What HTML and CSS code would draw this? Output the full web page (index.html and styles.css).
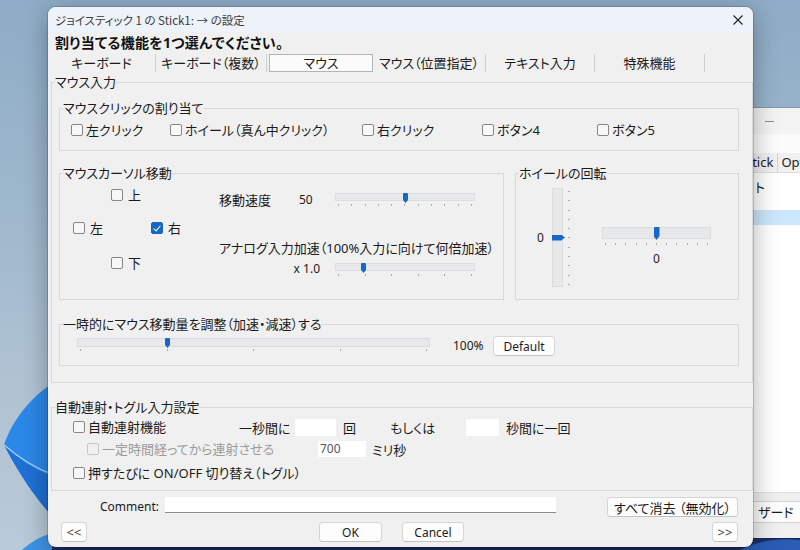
FILE: index.html
```html
<!DOCTYPE html>
<html lang="ja">
<head>
<meta charset="utf-8">
<title>Stick1 設定</title>
<link rel="stylesheet" href="styles.css">
</head>
<body>
<div class="desktop">
  <svg class="wallpaper" width="800" height="550" viewBox="0 0 800 550">
    <path d="M52 384 C32 396 12 420 4 445 C16 468 32 494 52 516 Z" fill="#2b88e8"/>
    <path d="M4 445 C18 458 34 470 52 476 L52 516 C32 494 16 468 4 445 Z" fill="#1f70d6"/>
    <path d="M4 445 C18 457 34 468 52 474" stroke="#a6d5fb" stroke-width="1.2" fill="none"/>
    <path d="M22 550 C32 541 42 536 52 533 L52 550 Z" fill="#3d93e6"/>
    <rect x="52" y="536" width="748" height="14" fill="#1b2d62"/>
    <path d="M740 550 C760 540 780 538 800 540 L800 550 Z" fill="#2a5bb5"/>
  </svg>

  <div class="bgwin">
    <div class="bgwin-title"><span class="bgwin-min"></span></div>
    <div class="bgwin-blank"></div>
    <div class="bgwin-menu"><span class="bgwin-menu-item">Stick</span><span class="bgwin-menu-item last">Opt</span></div>
    <div class="bgwin-list">
      <div class="bgwin-row">ト</div>
      <div class="bgwin-sel"></div>
    </div>
    <div class="bgwin-foot"><span class="bgwin-btn">ザード</span></div>
  </div>

  <div class="dialog">
    <div class="titlebar">
      <span class="title">ジョイスティック 1 の Stick1: → の設定</span>
      <svg class="close" width="10" height="10" viewBox="0 0 10 10"><path d="M0.5 0.5 L9.5 9.5 M9.5 0.5 L0.5 9.5" stroke="#1f1f1f" stroke-width="1.1"/></svg>
    </div>

    <h1 class="heading">割り当てる機能を1つ選んでください。</h1>

    <div class="tabs">
      <span class="tab t1">キーボード</span>
      <span class="tab t2">キーボード（複数）</span>
      <span class="tab t3 active">マウス</span>
      <span class="tab t4">マウス（位置指定）</span>
      <span class="tab t5">テキスト入力</span>
      <span class="tab t6">特殊機能</span>
    </div>

    <fieldset class="group outer">
      <legend>マウス入力</legend>

      <fieldset class="group click">
        <legend>マウスクリックの割り当て</legend>
        <div class="click-row">
          <label class="cb w99"><span class="box"></span>左クリック</label>
          <label class="cb w192"><span class="box"></span>ホイール（真ん中クリック）</label>
          <label class="cb w120"><span class="box"></span>右クリック</label>
          <label class="cb w115"><span class="box"></span>ボタン4</label>
          <label class="cb"><span class="box"></span>ボタン5</label>
        </div>
      </fieldset>

      <div class="move-row">
        <fieldset class="group cursor">
          <legend>マウスカーソル移動</legend>
          <div class="cursor-body">
            <div class="dpad">
              <label class="cb up"><span class="box"></span>上</label>
              <label class="cb left"><span class="box"></span>左</label>
              <label class="cb right"><span class="box checked"></span>右</label>
              <label class="cb down"><span class="box"></span>下</label>
            </div>
            <div class="move-col">
              <div class="mrow r1">
                <span class="mlabel">移動速度</span>
                <span class="mvalue">50</span>
                <div class="slider s140">
                  <div class="track"></div>
                  <span class="thumb" style="left:50%"></span>
                  <div class="ticks"><i></i><i></i><i></i><i></i><i></i><i></i><i></i><i></i><i></i><i></i><i></i></div>
                </div>
              </div>
              <div class="mrow r2">アナログ入力加速（100%入力に向けて何倍加速）</div>
              <div class="mrow r3">
                <span class="mvalue-right">x 1.0</span>
                <div class="slider s140 low">
                  <div class="track"></div>
                  <span class="thumb" style="left:20%"></span>
                  <div class="ticks"><i></i><i></i><i></i><i></i><i></i><i></i></div>
                </div>
              </div>
            </div>
          </div>
        </fieldset>

        <fieldset class="group wheel">
          <legend>ホイールの回転</legend>
          <div class="wheel-body">
            <span class="vlabel">0</span>
            <div class="vslider">
              <div class="vtrack"><span class="vthumb" style="top:50%"></span></div>
              <div class="vticks"><i></i><i></i><i></i><i></i><i></i><i></i><i></i><i></i><i></i><i></i><i></i></div>
            </div>
            <div class="hwrap">
              <div class="slider s109 tall">
                <div class="track"></div>
                <span class="thumb" style="left:50%"></span>
                <div class="ticks"><i></i><i></i><i></i><i></i><i></i><i></i><i></i><i></i><i></i><i></i><i></i></div>
              </div>
              <div class="hvalue">0</div>
            </div>
          </div>
        </fieldset>
      </div>

      <fieldset class="group temp">
        <legend>一時的にマウス移動量を調整（加速・減速）する</legend>
        <div class="temp-body">
          <div class="slider s353 mid">
            <div class="track"></div>
            <span class="thumb" style="left:25.5%"></span>
            <div class="ticks"><i></i><i></i><i></i><i></i><i></i></div>
          </div>
          <span class="percent">100%</span>
          <span class="btn btn-default">Default</span>
        </div>
      </fieldset>
    </fieldset>

    <fieldset class="group auto">
      <legend>自動連射・トグル入力設定</legend>
      <div class="auto-body">
        <div class="arow a1">
          <label class="cb w166"><span class="box"></span>自動連射機能</label>
          <span class="w56">一秒間に</span>
          <span class="field f41"></span>
          <span class="unit1">回</span>
          <span class="w76">もしくは</span>
          <span class="field f33"></span>
          <span class="unit2">秒間に一回</span>
        </div>
        <div class="arow a2">
          <label class="cb disabled w231"><span class="box"></span>一定時間経ってから連射させる</label>
          <span class="field f48">700</span>
          <span class="unit3">ミリ秒</span>
        </div>
        <div class="arow a3">
          <label class="cb"><span class="box"></span>押すたびに ON/OFF 切り替え（トグル）</label>
        </div>
      </div>
    </fieldset>

    <div class="comment-row">
      <span class="comment-label">Comment:</span>
      <span class="comment-input"></span>
      <span class="btn btn-clear">すべて消去 （無効化）</span>
    </div>

    <div class="button-row">
      <span class="btn btn-nav">&lt;&lt;</span>
      <span class="btn btn-ok">OK</span>
      <span class="btn btn-cancel">Cancel</span>
      <span class="btn btn-nav btn-next">&gt;&gt;</span>
    </div>
  </div>
</div>
</body>
</html>
```

FILE: styles.css
```css
* { box-sizing: border-box; }

html, body {
  margin: 0;
  padding: 0;
}

body {
  width: 800px;
  height: 550px;
  overflow: hidden;
  font-family: "Noto Sans", "Noto Sans CJK JP", sans-serif;
  font-size: 13px;
  color: #1b1b1b;
  font-feature-settings: "palt";
}

.desktop {
  position: relative;
  width: 800px;
  height: 550px;
  overflow: hidden;
  background: linear-gradient(180deg, #8eacc7 0%, #9db7cc 35%, #b0c3d3 70%, #b9cad8 100%);
}

.wallpaper {
  position: absolute;
  left: 0;
  top: 0;
}

/* background window on the right */
.bgwin {
  position: absolute;
  left: 740px;
  top: 108px;
  width: 60px;
  height: 430px;
  overflow: hidden;
  background: #ffffff;
  display: flex;
  flex-direction: column;
  box-shadow: 0 0 0 1px rgba(0,0,0,0.15);
}

.bgwin-title {
  height: 26px;
  background: #f3f3f3;
  position: relative;
}

.bgwin-min {
  position: absolute;
  left: 25px;
  top: 13px;
  width: 9px;
  height: 1px;
  background: #8a8a8a;
}

.bgwin-blank {
  height: 19px;
  background: #fbfbfb;
}

.bgwin-menu {
  height: 20px;
  background: #f0f0f0;
  border-bottom: 1px solid #dedede;
  display: flex;
  align-items: center;
  padding-left: 5px;
  font-size: 13px;
  white-space: nowrap;
}

.bgwin-menu-item {
  padding-right: 4px;
  border-right: 1px solid #d5d5d5;
  line-height: 19px;
}

.bgwin-menu-item.last {
  padding-left: 3px;
  padding-right: 0;
  border-right: none;
}

.bgwin-list {
  flex: 1;
  padding-top: 6px;
  border-bottom: 1px solid #dedede;
}

.bgwin-row {
  height: 16px;
  line-height: 16px;
  padding-left: 15px;
  font-size: 13px;
}

.bgwin-sel {
  margin-top: 15px;
  height: 15px;
  background: #cce6fb;
}

.bgwin-foot {
  height: 45px;
  background: #f0f0f0;
  padding-top: 8px;
  padding-left: 8px;
}

.bgwin-btn {
  display: block;
  height: 22px;
  line-height: 20px;
  padding-left: 9px;
  background: #fdfdfd;
  border: 1px solid #d3d3d3;
  border-right: none;
  border-radius: 4px 0 0 4px;
  font-size: 13px;
  white-space: nowrap;
}

/* dialog */
.dialog {
  position: absolute;
  left: 48px;
  top: 7px;
  width: 705px;
  height: 540px;
  background: #f0f0f0;
  border-radius: 8px;
  overflow: hidden;
  box-shadow: 0 0 0 1px rgba(0,0,0,0.16), 0 6px 26px rgba(0,0,0,0.33);
  display: flex;
  flex-direction: column;
}

.titlebar {
  height: 25px;
  flex: none;
  background: #eef3f9;
  display: flex;
  align-items: center;
  padding-left: 7px;
}

.title {
  font-family: "Noto Sans CJK JP", sans-serif;
  font-size: 11.5px;
  color: #3b3b3b;
  line-height: 16px;
}

.close {
  margin-left: auto;
  margin-right: 10px;
}

.heading {
  margin: 3px 0 0 7px;
  font-size: 14px;
  font-weight: bold;
  line-height: 16px;
  letter-spacing: 0.3px;
  color: #111;
}

.tabs {
  display: flex;
  margin-top: 3px;
  height: 18px;
  flex: none;
}

.tab {
  height: 18px;
  line-height: 18px;
  text-align: center;
  border-right: 1px solid #cfcfcf;
  white-space: nowrap;
}

.t1 { width: 108px; }
.t2 { width: 111px; }
.t3 { width: 104px; margin-left: 2px; }
.t4 { width: 113px; }
.t5 { width: 109px; }
.t6 { width: 110px; }

.tab.active {
  background: #fbfbfb;
  border: 1px solid #b4b4b4;
  line-height: 16px;
}

/* group boxes */
.group {
  margin: 0;
  padding: 0;
  min-width: 0;
  border: 1px solid #d9d9d9;
}

.group > legend {
  padding: 0;
  margin-left: 3px;
  line-height: 15px;
  height: 15px;
  font-size: 13px;
  white-space: nowrap;
}

.outer {
  margin: 3px 0 0 3px;
  width: 702px;
  padding-bottom: 16px;
}

.click {
  margin: 11px 0 0 7px;
  width: 680px;
}

.click-row {
  display: flex;
  padding: 6px 0 12px 11px;
}

/* checkboxes */
.cb {
  display: inline-flex;
  align-items: center;
  height: 16px;
  line-height: 16px;
  white-space: nowrap;
}

.box {
  width: 12px;
  height: 12px;
  flex: none;
  border: 1px solid #878787;
  border-radius: 2px;
  background: #f7f7f7;
  margin-right: 3px;
  position: relative;
}

.box.checked {
  background: #1767c6;
  border-color: #1767c6;
}

.box.checked::after {
  content: "";
  position: absolute;
  left: 3px;
  top: 1px;
  width: 3px;
  height: 6px;
  border-right: 1.5px solid #fff;
  border-bottom: 1.5px solid #fff;
  transform: rotate(40deg);
}

.cb.disabled {
  color: #9c9c9c;
}

.cb.disabled .box {
  border-color: #c6c6c6;
  background: #f0f0f0;
}

.w99 { width: 99px; }
.w192 { width: 192px; }
.w120 { width: 120px; }
.w115 { width: 115px; }
.w166 { width: 166px; }
.w231 { width: 231px; }
.w56 { width: 56px; white-space: nowrap; }
.w76 { width: 76px; white-space: nowrap; }

/* cursor + wheel */
.move-row {
  display: flex;
  margin: 15px 0 0 7px;
}

.cursor {
  width: 445px;
}

.wheel {
  width: 224px;
  margin-left: 11px;
}

.cursor-body {
  display: flex;
  height: 118px;
}

.dpad {
  display: grid;
  grid-template-columns: 38px 40px 68px;
  grid-template-rows: 33px 35px 16px;
  align-items: start;
  margin: 6px 0 0 13px;
  height: 84px;
}

.dpad .up { grid-column: 2; grid-row: 1; }
.dpad .left { grid-column: 1; grid-row: 2; }
.dpad .right { grid-column: 3; grid-row: 2; }
.dpad .down { grid-column: 2; grid-row: 3; }
.dpad .box { margin-right: 5px; }

.move-col {
  display: flex;
  flex-direction: column;
}

.mrow {
  height: 16px;
  line-height: 16px;
  display: flex;
  white-space: nowrap;
}

.r1 { margin-top: 11px; }
.r2 { margin-top: 32px; }
.r3 { margin-top: 5px; }

.mlabel { width: 80px; }

.mvalue {
  width: 36px;
  font-size: 12px;
}

.mvalue-right {
  width: 116px;
  padding-right: 15px;
  text-align: right;
  font-size: 12px;
}

/* sliders */
.slider {
  position: relative;
  flex: none;
}

.slider .track {
  height: 8px;
  background: #e6e8e9;
  border: 1px solid #dadddf;
}

.slider .thumb {
  position: absolute;
  top: 0;
  width: 5px;
  height: 10px;
  margin-left: -2px;
  background: #1767c6;
  border-radius: 1px 1px 0 0;
  clip-path: polygon(0 0, 100% 0, 100% 70%, 50% 100%, 0 70%);
}

.slider .ticks {
  display: flex;
  justify-content: space-between;
  padding: 0 3px;
  margin-top: 3px;
  height: 2px;
}

.ticks i {
  display: block;
  width: 1px;
  height: 2px;
  background: #ababab;
}

.s140 { width: 140px; margin-top: 1px; }
.s140.low { margin-top: 2px; }

.s109 { width: 109px; }

.slider.tall .track { height: 12px; }
.slider.tall .thumb { width: 6px; height: 13px; margin-left: -3px; }
.slider.tall .ticks { margin-top: 4px; }

.s353 { width: 353px; margin-top: 6px; }
.slider.mid .track { height: 9px; }
.slider.mid .ticks { margin-top: 2px; }

/* wheel */
.wheel-body {
  display: flex;
  height: 118px;
  padding-left: 21px;
}

.vlabel {
  width: 15px;
  height: 16px;
  line-height: 16px;
  margin-top: 49px;
  font-size: 12px;
}

.vslider {
  display: flex;
  margin-top: 7px;
  height: 99px;
}

.vtrack {
  position: relative;
  width: 11px;
  height: 99px;
  background: #e6e8e9;
  border: 1px solid #dadddf;
}

.vthumb {
  position: absolute;
  left: -1px;
  width: 13px;
  height: 6px;
  margin-top: -3px;
  background: #1767c6;
  clip-path: polygon(0 0, 70% 0, 100% 50%, 70% 100%, 0 100%);
}

.vticks {
  display: flex;
  flex-direction: column;
  justify-content: space-between;
  margin-left: 5px;
  padding: 3px 0 2px;
  height: 99px;
}

.vticks i {
  display: block;
  width: 2px;
  height: 1px;
  background: #ababab;
}

.hwrap {
  width: 109px;
  margin: 46px 0 0 32px;
}

.hvalue {
  margin-top: 6px;
  text-align: center;
  line-height: 16px;
  font-size: 12px;
}

/* temporary adjust */
.temp {
  margin: 17px 0 0 7px;
  width: 680px;
}

.temp-body {
  display: flex;
  align-items: flex-start;
  height: 33px;
  padding-left: 17px;
}

.percent {
  margin: 6px 0 0 23px;
  width: 40px;
  line-height: 16px;
  font-size: 12px;
}

/* buttons */
.btn {
  display: inline-flex;
  align-items: center;
  justify-content: center;
  height: 20px;
  background: #fdfdfd;
  border: 1px solid #d5d5d5;
  border-bottom-color: #c3c3c3;
  border-radius: 4px;
  font-size: 12px;
  white-space: nowrap;
  flex: none;
}

.btn-default {
  width: 62px;
  margin-top: 4px;
}

/* auto fire */
.auto {
  margin: 17px 0 0 3px;
  width: 702px;
}

.auto-body {
  padding: 3px 0 8px 21px;
}

.arow {
  display: flex;
  align-items: center;
  height: 18px;
  white-space: nowrap;
}

.a2 { margin-top: 4px; padding-left: 14px; }
.a3 { margin-top: 6px; }

.field {
  display: block;
  height: 17px;
  background: #ffffff;
  flex: none;
}

.f41 { width: 41px; }
.f33 { width: 33px; }
.f48 {
  width: 48px;
  height: 16px;
  line-height: 16px;
  padding-left: 2px;
  font-size: 12px;
  color: #555;
}

.unit1 { width: 47px; margin-left: 7px; }
.unit2 { margin-left: 7px; }
.unit3 { margin-left: 6px; }

/* comment row */
.comment-row {
  display: flex;
  align-items: flex-start;
  margin-top: 6px;
  height: 20px;
  padding-left: 52px;
  flex: none;
}

.comment-label {
  width: 65px;
  margin-top: 2px;
  line-height: 16px;
  font-size: 12px;
}

.comment-input {
  display: block;
  width: 391px;
  height: 16px;
  background: #ffffff;
  border-bottom: 1px solid #8c8c8c;
}

.btn-clear {
  width: 131px;
  margin-left: 51px;
  font-size: 13px;
}

/* bottom buttons */
.button-row {
  display: flex;
  margin-top: 5px;
  height: 20px;
  padding-left: 13px;
  flex: none;
}

.btn-nav { width: 26px; font-size: 13px; color: #444; }
.btn-ok { width: 63px; margin-left: 232px; }
.btn-cancel { width: 62px; margin-left: 20px; }
.btn-next { margin-left: 248px; }
```
